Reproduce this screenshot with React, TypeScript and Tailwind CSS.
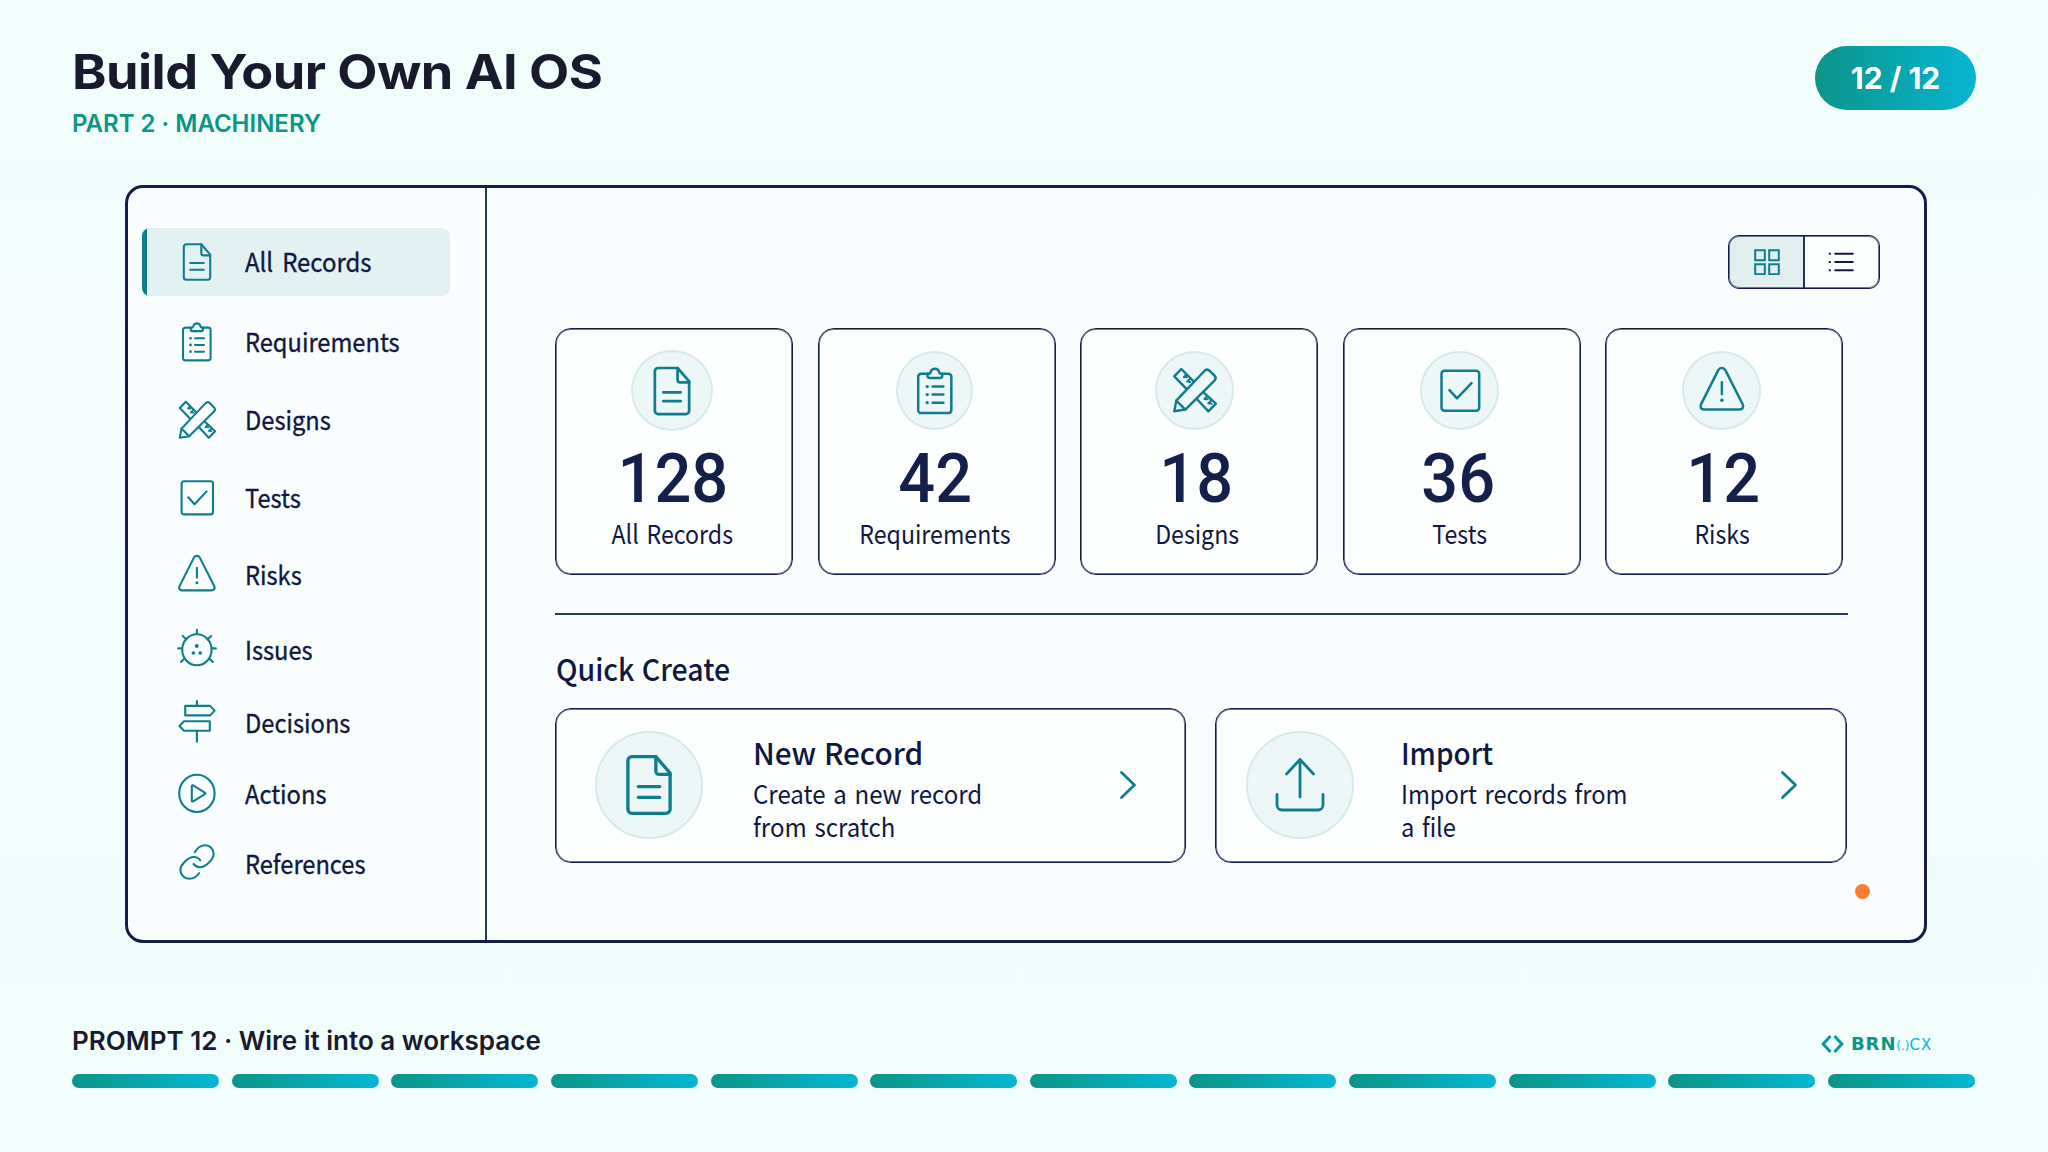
import React from 'react';

type IconName =
  | 'doc'
  | 'clipboard'
  | 'design'
  | 'check'
  | 'risk'
  | 'issue'
  | 'sign'
  | 'play'
  | 'link';

const shapes: Record<IconName, React.ReactNode> = {
  doc: (
    <>
      <path d="M9 2.3H24.3L33.2 12.6V35.2a2.5 2.5 0 0 1-2.5 2.5H9.3a2.5 2.5 0 0 1-2.5-2.5V4.8A2.5 2.5 0 0 1 9.3 2.3" />
      <path d="M24.3 2.3V11.4a2 2 0 0 0 2 2H33.2M13.3 21H26.7M13.3 27.7H26.7" />
    </>
  ),
  clipboard: (
    <>
      <path d="M13.8 5.6H8.4A2.4 2.4 0 0 0 6 8V36a2.4 2.4 0 0 0 2.4 2.4H31.2A2.4 2.4 0 0 0 33.6 36V8a2.4 2.4 0 0 0-2.4-2.4H26" />
      <path d="M13.8 5.6V7.6A1.5 1.5 0 0 0 15.3 9.1H24.5A1.5 1.5 0 0 0 26 7.6V5.6H24.4C23.6 5.2 23.6 4.6 23.4 3.9a3.7 3.7 0 0 0-7 0C16.2 4.6 16.2 5.2 15.4 5.6Z" />
      <path d="M18 16.3H27M18 23H27M18 29.7H27" />
      <path strokeWidth="2.8" d="M13.5 16.3h.01M13.5 23h.01M13.5 29.7h.01" />
    </>
  ),
  design: (
    <>
      <path d="M2.8 37.7L4.5 28.6L28.4 3.4C29.8 2 31.5 1.9 32.9 3.2L37.1 7.4C38.3 8.7 38.2 10.3 37 11.6L12.2 36.2Z" />
      <path d="M4.5 28.6L12.2 36.2M19.4 12.4L8.8 1.7L2.8 8L13.2 18.7M27.4 21.4L38.2 31.2L31.8 37.7L21.8 27" />
      <path strokeWidth="1.8" d="M13 6.3L11 8.4L13.2 8.6M16.5 9.8L13.8 12.4L16.3 12.8M30.8 24.8L28.4 27.2L31.2 27.4M34.4 28.3L31.8 30.8L34.4 31.2" />
    </>
  ),
  check: (
    <>
      <rect x="4.6" y="3.2" width="31.4" height="33.2" rx="2.4" />
      <path d="M11.2 19.3L17.5 26.2L29.6 13.4" />
    </>
  ),
  risk: (
    <>
      <path d="M16.9 2.6C18.2 .3 21.5 .3 22.8 2.6L37.2 31C38.3 33.3 37.2 35.4 34.7 35.4H5C2.5 35.4 1.4 33.3 2.6 31Z" />
      <path d="M19.9 12.8V22.6" />
      <path strokeWidth="3" d="M19.9 27.7h.01" />
    </>
  ),
  issue: (
    <>
      <ellipse cx="19.9" cy="19.7" rx="14.7" ry="15.5" />
      <path d="M19.9-.2V4M1.2 18.4H5M34.8 18.4H38.8M5.7 6L9.4 9.4M34.2 6L30.4 9.4M4 32L7.3 28.8M35.8 32L32.5 28.8" />
      <g fill="currentColor" stroke="none">
        <circle cx="19.8" cy="16" r="2" />
        <circle cx="16.4" cy="23" r="1.8" />
        <circle cx="23.2" cy="23" r="1.8" />
      </g>
    </>
  ),
  sign: (
    <path d="M19.9-2V2.8M8.2 2.9H33.2L37.6 7.6L33.2 12.4H8.2ZM32.8 18.3H7L2.4 23L7 27.7H32.8ZM19.9 27.7V38.8" />
  ),
  play: (
    <>
      <ellipse cx="19.9" cy="19.4" rx="17.7" ry="18.6" />
      <path d="M14.8 12.2C14.8 11.4 15.5 11 16.2 11.4L27.8 18.6C28.5 19 28.5 19.7 27.8 20.2L16.3 27.4C15.5 27.8 14.8 27.4 14.8 26.7Z" />
    </>
  ),
  link: (
    <>
      <path d="M17.8 8.2C20.5 3.5 24 1.2 28 1.2C33 1.2 36.6 5 36.6 10C36.6 13.5 34.5 16 32 18.5C29 21.5 26 23.3 22.8 23.3C20.3 23.3 18.3 22 16.5 20" />
      <path d="M23.2 16.3C21.8 14 19.5 13 16.8 13C13 13 9.5 15.8 7 18.5C4.5 21 3.4 23 3.4 26C3.4 31 7.5 34.8 12.3 34.8C16.5 34.8 19.8 32.5 22.2 29" />
    </>
  ),
};

const Icon: React.FC<{ name: IconName; className: string }> = ({ name, className }) => (
  <svg
    viewBox="0 0 40 40"
    className={`shrink-0 overflow-visible text-[#0f7e8c] ${className}`}
    fill="none"
    stroke="currentColor"
    strokeWidth="2.1"
    strokeLinecap="round"
    strokeLinejoin="round"
  >
    {shapes[name]}
  </svg>
);

const navItems: { label: string; icon: IconName; row: string }[] = [
  { label: 'Requirements', icon: 'clipboard', row: 'mt-4' },
  { label: 'Designs', icon: 'design', row: 'mt-[18px]' },
  { label: 'Tests', icon: 'check', row: 'mt-[18px]' },
  { label: 'Risks', icon: 'risk', row: 'mt-[17px]' },
  { label: 'Issues', icon: 'issue', row: 'mt-[15px]' },
  { label: 'Decisions', icon: 'sign', row: 'mt-[13px]' },
  { label: 'Actions', icon: 'play', row: 'mt-[11px]' },
  { label: 'References', icon: 'link', row: 'mt-[10px]' },
];

const stats: { label: string; value: number; icon: IconName; circle: string; size: string; num: string }[] = [
  { label: 'All Records', value: 128, icon: 'doc', circle: 'w-[82px] h-[81px] mr-[5px]', size: 'size-[52px]', num: 'mr-[3px]' },
  { label: 'Requirements', value: 42, icon: 'clipboard', circle: 'w-[77px] h-[79px] mr-[4px]', size: 'size-[48px]', num: 'mr-[2px]' },
  { label: 'Designs', value: 18, icon: 'design', circle: 'w-[79px] h-[79px] mr-[10px]', size: 'size-[47px]', num: 'mr-[6px]' },
  { label: 'Tests', value: 36, icon: 'check', circle: 'w-[79px] h-[79px] mr-[4px]', size: 'size-[48px]', num: 'mr-[6px]' },
  { label: 'Risks', value: 12, icon: 'risk', circle: 'w-[79px] h-[79px] mr-[5px]', size: 'size-[48px]', num: 'mr-[2px]' },
];

const Chevron = () => (
  <svg viewBox="0 0 16 28" className="w-4 h-7 overflow-visible" fill="none" stroke="#0f7e8c" strokeWidth="2.8" strokeLinecap="round" strokeLinejoin="round">
    <path d="M1.5 1.5L14.5 14L1.5 26.5" />
  </svg>
);

const App: React.FC = () => {
  return (
    <div className="w-[2048px] h-[1152px] overflow-hidden flex flex-col bg-linear-to-b from-[#f0fdfb] from-13% via-[#f4fcfc] via-30% to-[#f0fdfb] to-88% font-['Inter',sans-serif] text-[#1a1a2e]">
      <header className="h-[185px] shrink-0 pl-[72px] pr-[72px] pt-[46px] flex justify-between items-start">
        <div>
          <h1 className="text-[48px] leading-[56px] font-bold tracking-[-0.5px] -mt-[2px] whitespace-nowrap origin-left scale-x-[1.088]">Build Your Own AI OS</h1>
          <p className="text-2xl leading-8 font-semibold text-[#0d9488] mt-[8px] whitespace-nowrap">PART 2 · MACHINERY</p>
        </div>
        <div className="w-[161px] h-16 rounded-full bg-linear-to-r from-[#0d9488] to-[#06b6d4] flex items-center justify-center text-white text-[30px] font-bold">
          12 / 12
        </div>
      </header>

      <main className="ml-[125px] w-[1802px] h-[758px] shrink-0 rounded-[18px] border-[3px] border-[#161b48] bg-[#fafdfe] flex font-['Noto_Sans_CJK_SC',sans-serif] text-[#101842]">
        <nav className="w-[359px] shrink-0 border-r-2 border-[#26365f] pl-[14px] pt-10">
          <div className="w-[308px] h-[68px] rounded-lg bg-[#e2f1f1] flex items-center overflow-hidden">
            <div className="w-[6px] h-full bg-[#0f7e8c] border-r border-[#f4fbfb]" />
            <Icon name="doc" className="size-10 ml-[28.5px]" />
            <span className="ml-[28.5px] -mt-[2px] text-[26px] leading-none whitespace-nowrap origin-left scale-x-[0.92] [word-spacing:4px] [-webkit-text-stroke:0.35px]">All Records</span>
          </div>
          {navItems.map((item) => (
            <div key={item.label} className={`h-[60px] flex items-center ${item.row}`}>
              <Icon name={item.icon} className="size-10 ml-[34.5px]" />
              <span className="ml-[28.5px] -mt-[2px] text-[26px] leading-none whitespace-nowrap origin-left scale-x-[0.91] [-webkit-text-stroke:0.35px]">{item.label}</span>
            </div>
          ))}
        </nav>

        <section className="pl-[68px] flex-1 flex flex-col">
          <div className="mt-[47px] ml-[1173px] w-[152px] h-[54px] rounded-[11px] border border-[#141c4a] shadow-[inset_0_0_0_1px_rgba(20,28,74,0.6)] bg-[#fdfefe] flex">
            <div className="w-[76px] rounded-l-[10px] bg-[#0f7e8c]/12 border-r-2 border-[#26305c] flex items-center justify-center pl-px">
              <svg viewBox="0 0 26 26" className="size-[26px]" fill="none" stroke="#0f7e8c" strokeWidth="2">
                <path d="M1.2 1.2h9.6v10H1.2zM15.2 1.2h9.6v10h-9.6zM1.2 15.2h9.6v10H1.2zM15.2 15.2h9.6v10h-9.6z" />
              </svg>
            </div>
            <div className="flex-1 flex items-center justify-center pr-[2px]">
              <svg viewBox="0 0 26 20" className="w-[26px] h-5" fill="none" stroke="#101842" strokeWidth="2">
                <path d="M.8 1.8h2M6.5 1.8H25.5M.8 10h2M6.5 10H25.5M.8 18.2h2M6.5 18.2H25.5" />
              </svg>
            </div>
          </div>

          <div className="mt-[39px] w-[1288px] flex justify-between">
            {stats.map((s) => (
              <div
                key={s.label}
                className="w-[238px] h-[247px] shrink-0 rounded-2xl border border-[#141c4a] shadow-[inset_0_0_0_1px_rgba(20,28,74,0.6)] bg-[#fdfefe] flex flex-col items-center"
              >
                <div className="h-[81px] mt-[21px] flex items-center">
                  <div className={`rounded-[50%] border-2 border-[#d5ebeb] bg-[#eef7f8] flex items-center justify-center ${s.circle}`}>
                    <Icon name={s.icon} className={s.size} />
                  </div>
                </div>
                <div className={`mt-[13px] text-[69px] leading-[70px] h-[70px] font-medium font-['Roboto',sans-serif] text-[#14204a] scale-x-[0.94] ${s.num}`}>{s.value}</div>
                <div className="mt-[5px] mr-[4px] text-[26px] leading-[28px] whitespace-nowrap scale-x-[0.89] [word-spacing:3px]">{s.label}</div>
              </div>
            ))}
          </div>

          <div className="mt-[38px] w-[1293px] h-[2px] bg-[#26365f]" />
          <h2 className="mt-[37px] ml-[1px] text-[30px] leading-8 font-medium origin-left scale-x-[0.95] [word-spacing:1px]">Quick Create</h2>

          <div className="mt-[24px] flex">
            <div className="w-[631px] h-[155px] rounded-2xl border border-[#141c4a] shadow-[inset_0_0_0_1px_rgba(20,28,74,0.6)] bg-[#fdfefe] flex items-center pl-[39px] pr-[49px] pb-[2px]">
              <div className="size-[108px] shrink-0 rounded-full border-2 border-[#d5ebeb] bg-[#eef7f8] flex items-center justify-center">
                <Icon name="doc" className="size-[64px]" />
              </div>
              <div className="ml-[50px] mt-[7px] flex-1">
                <h3 className="text-[30px] leading-9 font-medium origin-left scale-x-[0.99] [word-spacing:1px]">New Record</h3>
                <p className="mt-[6px] text-[26px] leading-[33px] origin-left scale-x-[0.925] [word-spacing:2.5px]">Create a new record<br />from scratch</p>
              </div>
              <Chevron />
            </div>
            <div className="ml-[29px] w-[632px] h-[155px] rounded-2xl border border-[#141c4a] shadow-[inset_0_0_0_1px_rgba(20,28,74,0.6)] bg-[#fdfefe] flex items-center pl-[30px] pr-[49px] pb-[2px]">
              <div className="size-[108px] shrink-0 rounded-full border-2 border-[#d5ebeb] bg-[#eef7f8] flex items-center justify-center">
                <svg viewBox="0 0 50 56" className="w-[50px] h-[56px]" fill="none" stroke="#0f7e8c" strokeWidth="2.8" strokeLinecap="round" strokeLinejoin="round">
                  <path d="M25 2.5V40M11.5 17L25 2.5L38.5 17M2 37.5V48a5 5 0 0 0 5 5H43a5 5 0 0 0 5-5V37.5" />
                </svg>
              </div>
              <div className="ml-[47px] mt-[7px] flex-1">
                <h3 className="text-[30px] leading-9 font-medium origin-left scale-x-[0.93]">Import</h3>
                <p className="mt-[6px] text-[26px] leading-[33px] origin-left scale-x-[0.91] [word-spacing:2.5px]">Import records from<br />a file</p>
              </div>
              <Chevron />
            </div>
          </div>

          <div className="mt-[21px] ml-[1300px] size-[15px] rounded-full bg-[#f97c32]" />
        </section>
      </main>

      <footer className="flex-1 pl-[72px] pt-[82px]">
        <div className="w-[1903px] h-[32px] flex justify-between items-center">
          <p className="text-[26px] leading-8 font-semibold whitespace-nowrap">PROMPT 12 · Wire it into a workspace</p>
          <div className="flex items-center w-[154px] mt-[5px] font-['DejaVu_Sans',sans-serif] leading-none">
            <svg viewBox="0 0 23 18" className="w-[23px] h-[18px] shrink-0" fill="none" stroke="#0e97a0" strokeWidth="3">
              <path d="M9.5 1L2.2 9L9.5 17M13.5 1L20.8 9L13.5 17" />
            </svg>
            <div className="ml-[7px] flex items-baseline">
              <span className="text-[18px] font-bold tracking-[0.9px] text-[#0d9488]">BRN</span>
              <span className="text-[12px] text-[#22b8cf]">(.)</span>
              <span className="text-[15px] tracking-[1px] text-[#06b6d4]">CX</span>
            </div>
          </div>
        </div>
        <div className="mt-[17px] w-[1903px] flex justify-between">
          {Array.from({ length: 12 }).map((_, i) => (
            <div key={i} className="w-[147px] h-[14px] rounded-full bg-linear-to-r from-[#0d9488] to-[#06b6d4]" />
          ))}
        </div>
      </footer>
    </div>
  );
};

export default App;
